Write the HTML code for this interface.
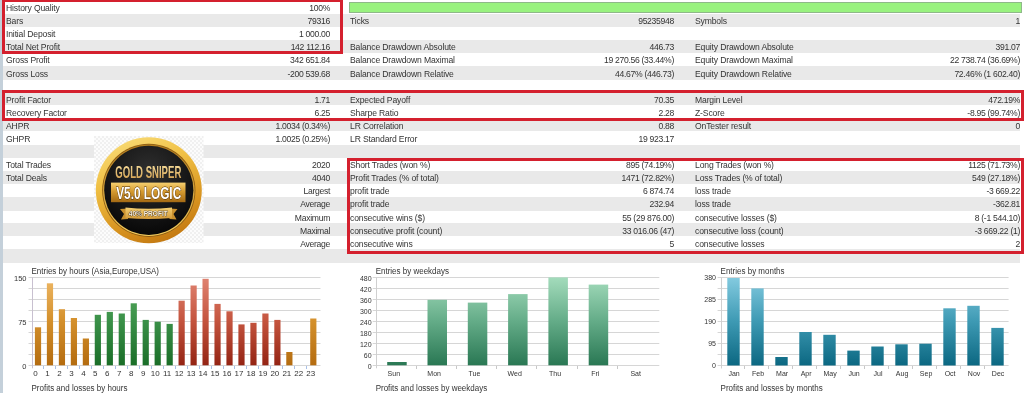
<!DOCTYPE html>
<html><head><meta charset="utf-8"><style>
html,body{margin:0;padding:0;}
body{width:1024px;height:412px;overflow:hidden;position:relative;background:#fff;filter:blur(0.3px);font-family:"Liberation Sans",sans-serif;}
.bg{position:absolute;left:3px;width:1017px;background:#e9e9e9;}
.t{position:absolute;font-size:8.6px;letter-spacing:-0.15px;line-height:13px;color:#333;white-space:nowrap;}
.box{position:absolute;box-sizing:border-box;border:3px solid #d4202e;}
.r{letter-spacing:-0.3px;}
.strip{position:absolute;left:0;top:0;width:3px;height:393px;background:#c4d0da;}
.ch,.logo{position:absolute;left:0;top:0;}
</style></head><body>
<div class="strip"></div>
<div class="bg" style="top:14px;height:13px"></div><div class="bg" style="top:40px;height:13px"></div><div class="bg" style="top:66px;height:14px"></div><div class="bg" style="top:92px;height:13px"></div><div class="bg" style="top:118px;height:13px"></div><div class="bg" style="top:145px;height:13px"></div><div class="bg" style="top:171px;height:13px"></div><div class="bg" style="top:197px;height:14px"></div><div class="bg" style="top:223px;height:13px"></div><div class="bg" style="top:249px;height:14px"></div><div class="t" style="left:6px;top:1.5px">History Quality</div><div class="t r" style="right:694px;top:1.5px">100%</div><div class="t" style="left:6px;top:14.5px">Bars</div><div class="t r" style="right:694px;top:14.5px">79316</div><div class="t" style="left:6px;top:27.5px">Initial Deposit</div><div class="t r" style="right:694px;top:27.5px">1 000.00</div><div class="t" style="left:6px;top:40.5px">Total Net Profit</div><div class="t r" style="right:694px;top:40.5px">142 112.16</div><div class="t" style="left:6px;top:53.5px">Gross Profit</div><div class="t r" style="right:694px;top:53.5px">342 651.84</div><div class="t" style="left:6px;top:67.5px">Gross Loss</div><div class="t r" style="right:694px;top:67.5px">-200 539.68</div><div class="t" style="left:6px;top:93.5px">Profit Factor</div><div class="t r" style="right:694px;top:93.5px">1.71</div><div class="t" style="left:6px;top:106.5px">Recovery Factor</div><div class="t r" style="right:694px;top:106.5px">6.25</div><div class="t" style="left:6px;top:119.5px">AHPR</div><div class="t r" style="right:694px;top:119.5px">1.0034 (0.34%)</div><div class="t" style="left:6px;top:132.5px">GHPR</div><div class="t r" style="right:694px;top:132.5px">1.0025 (0.25%)</div><div class="t" style="left:6px;top:158.5px">Total Trades</div><div class="t r" style="right:694px;top:158.5px">2020</div><div class="t" style="left:6px;top:171.5px">Total Deals</div><div class="t r" style="right:694px;top:171.5px">4040</div><div class="t r" style="right:694px;top:184.5px">Largest</div><div class="t r" style="right:694px;top:197.5px">Average</div><div class="t r" style="right:694px;top:211.5px">Maximum</div><div class="t r" style="right:694px;top:224.5px">Maximal</div><div class="t r" style="right:694px;top:237.5px">Average</div><div class="t" style="left:350px;top:14.5px">Ticks</div><div class="t r" style="right:350px;top:14.5px">95235948</div><div class="t" style="left:350px;top:40.5px">Balance Drawdown Absolute</div><div class="t r" style="right:350px;top:40.5px">446.73</div><div class="t" style="left:350px;top:53.5px">Balance Drawdown Maximal</div><div class="t r" style="right:350px;top:53.5px">19 270.56 (33.44%)</div><div class="t" style="left:350px;top:67.5px">Balance Drawdown Relative</div><div class="t r" style="right:350px;top:67.5px">44.67% (446.73)</div><div class="t" style="left:350px;top:93.5px">Expected Payoff</div><div class="t r" style="right:350px;top:93.5px">70.35</div><div class="t" style="left:350px;top:106.5px">Sharpe Ratio</div><div class="t r" style="right:350px;top:106.5px">2.28</div><div class="t" style="left:350px;top:119.5px">LR Correlation</div><div class="t r" style="right:350px;top:119.5px">0.88</div><div class="t" style="left:350px;top:132.5px">LR Standard Error</div><div class="t r" style="right:350px;top:132.5px">19 923.17</div><div class="t" style="left:350px;top:158.5px">Short Trades (won %)</div><div class="t r" style="right:350px;top:158.5px">895 (74.19%)</div><div class="t" style="left:350px;top:171.5px">Profit Trades (% of total)</div><div class="t r" style="right:350px;top:171.5px">1471 (72.82%)</div><div class="t" style="left:350px;top:184.5px">profit trade</div><div class="t r" style="right:350px;top:184.5px">6 874.74</div><div class="t" style="left:350px;top:197.5px">profit trade</div><div class="t r" style="right:350px;top:197.5px">232.94</div><div class="t" style="left:350px;top:211.5px">consecutive wins ($)</div><div class="t r" style="right:350px;top:211.5px">55 (29 876.00)</div><div class="t" style="left:350px;top:224.5px">consecutive profit (count)</div><div class="t r" style="right:350px;top:224.5px">33 016.06 (47)</div><div class="t" style="left:350px;top:237.5px">consecutive wins</div><div class="t r" style="right:350px;top:237.5px">5</div><div class="t" style="left:695px;top:14.5px">Symbols</div><div class="t r" style="right:4px;top:14.5px">1</div><div class="t" style="left:695px;top:40.5px">Equity Drawdown Absolute</div><div class="t r" style="right:4px;top:40.5px">391.07</div><div class="t" style="left:695px;top:53.5px">Equity Drawdown Maximal</div><div class="t r" style="right:4px;top:53.5px">22 738.74 (36.69%)</div><div class="t" style="left:695px;top:67.5px">Equity Drawdown Relative</div><div class="t r" style="right:4px;top:67.5px">72.46% (1 602.40)</div><div class="t" style="left:695px;top:93.5px">Margin Level</div><div class="t r" style="right:4px;top:93.5px">472.19%</div><div class="t" style="left:695px;top:106.5px">Z-Score</div><div class="t r" style="right:4px;top:106.5px">-8.95 (99.74%)</div><div class="t" style="left:695px;top:119.5px">OnTester result</div><div class="t r" style="right:4px;top:119.5px">0</div><div class="t" style="left:695px;top:158.5px">Long Trades (won %)</div><div class="t r" style="right:4px;top:158.5px">1125 (71.73%)</div><div class="t" style="left:695px;top:171.5px">Loss Trades (% of total)</div><div class="t r" style="right:4px;top:171.5px">549 (27.18%)</div><div class="t" style="left:695px;top:184.5px">loss trade</div><div class="t r" style="right:4px;top:184.5px">-3 669.22</div><div class="t" style="left:695px;top:197.5px">loss trade</div><div class="t r" style="right:4px;top:197.5px">-362.81</div><div class="t" style="left:695px;top:211.5px">consecutive losses ($)</div><div class="t r" style="right:4px;top:211.5px">8 (-1 544.10)</div><div class="t" style="left:695px;top:224.5px">consecutive loss (count)</div><div class="t r" style="right:4px;top:224.5px">-3 669.22 (1)</div><div class="t" style="left:695px;top:237.5px">consecutive losses</div><div class="t r" style="right:4px;top:237.5px">2</div><div style="position:absolute;left:349px;top:2px;width:671px;height:9px;background:#99f27f;border:1px solid #8fb889"></div>
<svg class="logo" width="1024" height="412" font-family="Liberation Sans, sans-serif">
<defs>
<pattern id="chk" x="94" y="136" width="4" height="4" patternUnits="userSpaceOnUse"><rect width="4" height="4" fill="#fcfcfc"/><rect width="2" height="2" fill="#f0f0f0"/><rect x="2" y="2" width="2" height="2" fill="#f0f0f0"/></pattern>
<linearGradient id="ring" x1="0.2" y1="0" x2="0.6" y2="1"><stop offset="0" stop-color="#f9dc78"/><stop offset="0.35" stop-color="#f0c044"/><stop offset="0.75" stop-color="#d89420"/><stop offset="1" stop-color="#c47a12"/></linearGradient>
<linearGradient id="rim" x1="0" y1="1" x2="0" y2="0"><stop offset="0" stop-color="#f4cc5c"/><stop offset="1" stop-color="#b07a1c"/></linearGradient>
<radialGradient id="blk" cx="0.5" cy="0.3" r="0.75"><stop offset="0" stop-color="#303030"/><stop offset="0.6" stop-color="#161616"/><stop offset="1" stop-color="#050505"/></radialGradient>
<linearGradient id="ban" x1="0" y1="0" x2="0" y2="1"><stop offset="0" stop-color="#f6d070"/><stop offset="0.45" stop-color="#d49a30"/><stop offset="1" stop-color="#a46a14"/></linearGradient>
<linearGradient id="rib" x1="0" y1="0" x2="0" y2="1"><stop offset="0" stop-color="#f4cf72"/><stop offset="1" stop-color="#d29a3a"/></linearGradient>
<linearGradient id="txtg" x1="0" y1="0" x2="0" y2="1"><stop offset="0" stop-color="#f8e0a0"/><stop offset="1" stop-color="#d09a48"/></linearGradient>
</defs>
<rect x="94" y="136" width="109.5" height="107" fill="url(#chk)"/>
<circle cx="148.8" cy="190.3" r="53" fill="url(#ring)"/>
<circle cx="148.8" cy="190.3" r="46.6" fill="#8a5a12"/>
<circle cx="148.8" cy="190.3" r="45.8" fill="url(#rim)"/>
<circle cx="148.8" cy="190.3" r="44.6" fill="url(#blk)"/>
<text x="148.3" y="178.4" font-size="16.5" font-weight="bold" text-anchor="middle" fill="url(#txtg)" textLength="66" lengthAdjust="spacingAndGlyphs">GOLD SNIPER</text>
<rect x="111" y="182.6" width="74.5" height="19.6" fill="url(#ban)"/>
<text x="148.7" y="198.6" font-size="17" font-weight="bold" text-anchor="middle" fill="#fff" stroke="#4a2a04" stroke-width="0.9" paint-order="stroke" textLength="65" lengthAdjust="spacingAndGlyphs">V5.0 LOGIC</text>
<path d="M120 209 L128 208.5 L128 219 L121 219.5 L124 214 Z M177.5 209 L169.5 208.5 L169.5 219 L176.5 219.5 L173.5 214 Z" fill="#c8902e"/>
<path d="M125.5 207.5 Q148.5 210 172 207.5 L172 218 Q148.5 220 125.5 218 Z" fill="url(#rib)"/>
<text x="148.3" y="216" font-size="6.8" font-weight="bold" text-anchor="middle" fill="#f8f0e0" stroke="#3a2608" stroke-width="0.7" paint-order="stroke" textLength="39" lengthAdjust="spacingAndGlyphs">40% PROFIT</text>
</svg>
<svg class="ch" width="1024" height="412" font-family="Liberation Sans, sans-serif"><defs><linearGradient id="go" gradientUnits="userSpaceOnUse" x1="0" y1="277" x2="0" y2="365"><stop offset="0" stop-color="#eeb866"/><stop offset="0.5" stop-color="#d4902c"/><stop offset="1" stop-color="#b46c10"/></linearGradient><linearGradient id="gg" gradientUnits="userSpaceOnUse" x1="0" y1="277" x2="0" y2="365"><stop offset="0" stop-color="#5cae62"/><stop offset="0.5" stop-color="#3a9048"/><stop offset="1" stop-color="#1a6e28"/></linearGradient><linearGradient id="gr" gradientUnits="userSpaceOnUse" x1="0" y1="277" x2="0" y2="365"><stop offset="0" stop-color="#e08472"/><stop offset="0.5" stop-color="#c4543e"/><stop offset="1" stop-color="#942414"/></linearGradient><linearGradient id="gw" gradientUnits="userSpaceOnUse" x1="0" y1="277" x2="0" y2="365"><stop offset="0" stop-color="#a4dcbc"/><stop offset="0.5" stop-color="#64ac88"/><stop offset="1" stop-color="#2a7854"/></linearGradient><linearGradient id="gm" gradientUnits="userSpaceOnUse" x1="0" y1="277" x2="0" y2="365"><stop offset="0" stop-color="#84cbe0"/><stop offset="0.5" stop-color="#3e9ab4"/><stop offset="1" stop-color="#0c6882"/></linearGradient></defs><line x1="28.5" y1="277.5" x2="320.5" y2="277.5" stroke="#d6d6d6" stroke-width="1"/><text x="26.5" y="280.70" font-size="7.5" text-anchor="end" fill="#333">150</text><line x1="28.5" y1="288.5" x2="320.5" y2="288.5" stroke="#d6d6d6" stroke-width="1"/><text x="26.5" y="291.70" font-size="7.5" text-anchor="end" fill="#333"></text><line x1="28.5" y1="299.5" x2="320.5" y2="299.5" stroke="#d6d6d6" stroke-width="1"/><text x="26.5" y="302.70" font-size="7.5" text-anchor="end" fill="#333"></text><line x1="28.5" y1="310.5" x2="320.5" y2="310.5" stroke="#d6d6d6" stroke-width="1"/><text x="26.5" y="313.70" font-size="7.5" text-anchor="end" fill="#333"></text><line x1="28.5" y1="321.5" x2="320.5" y2="321.5" stroke="#d6d6d6" stroke-width="1"/><text x="26.5" y="324.70" font-size="7.5" text-anchor="end" fill="#333">75</text><line x1="28.5" y1="332.5" x2="320.5" y2="332.5" stroke="#d6d6d6" stroke-width="1"/><text x="26.5" y="335.70" font-size="7.5" text-anchor="end" fill="#333"></text><line x1="28.5" y1="343.5" x2="320.5" y2="343.5" stroke="#d6d6d6" stroke-width="1"/><text x="26.5" y="346.70" font-size="7.5" text-anchor="end" fill="#333"></text><line x1="28.5" y1="354.5" x2="320.5" y2="354.5" stroke="#d6d6d6" stroke-width="1"/><text x="26.5" y="357.70" font-size="7.5" text-anchor="end" fill="#333"></text><line x1="28.5" y1="365.5" x2="320.5" y2="365.5" stroke="#d6d6d6" stroke-width="1"/><text x="26.5" y="368.70" font-size="7.5" text-anchor="end" fill="#333">0</text><line x1="32.5" y1="277.3" x2="32.5" y2="368.3" stroke="#c8c0d0" stroke-width="1"/><rect x="34.90" y="327.30" width="6.2" height="38.00" fill="url(#go)"/><text x="35.48" y="375.80" font-size="8" text-anchor="middle" fill="#333">0</text><rect x="46.87" y="283.30" width="6.2" height="82.00" fill="url(#go)"/><text x="47.45" y="375.80" font-size="8" text-anchor="middle" fill="#333">1</text><line x1="43.5" y1="366" x2="43.5" y2="369" stroke="#a8c0e8"/><rect x="58.84" y="309.20" width="6.2" height="56.10" fill="url(#go)"/><text x="59.42" y="375.80" font-size="8" text-anchor="middle" fill="#333">2</text><line x1="55.5" y1="366" x2="55.5" y2="369" stroke="#a8c0e8"/><rect x="70.81" y="318.00" width="6.2" height="47.30" fill="url(#go)"/><text x="71.40" y="375.80" font-size="8" text-anchor="middle" fill="#333">3</text><line x1="67.5" y1="366" x2="67.5" y2="369" stroke="#a8c0e8"/><rect x="82.78" y="338.50" width="6.2" height="26.80" fill="url(#go)"/><text x="83.37" y="375.80" font-size="8" text-anchor="middle" fill="#333">4</text><line x1="79.5" y1="366" x2="79.5" y2="369" stroke="#a8c0e8"/><rect x="94.75" y="314.80" width="6.2" height="50.50" fill="url(#gg)"/><text x="95.34" y="375.80" font-size="8" text-anchor="middle" fill="#333">5</text><line x1="91.5" y1="366" x2="91.5" y2="369" stroke="#a8c0e8"/><rect x="106.72" y="311.90" width="6.2" height="53.40" fill="url(#gg)"/><text x="107.31" y="375.80" font-size="8" text-anchor="middle" fill="#333">6</text><line x1="103.5" y1="366" x2="103.5" y2="369" stroke="#a8c0e8"/><rect x="118.69" y="313.50" width="6.2" height="51.80" fill="url(#gg)"/><text x="119.28" y="375.80" font-size="8" text-anchor="middle" fill="#333">7</text><line x1="115.5" y1="366" x2="115.5" y2="369" stroke="#a8c0e8"/><rect x="130.66" y="303.30" width="6.2" height="62.00" fill="url(#gg)"/><text x="131.25" y="375.80" font-size="8" text-anchor="middle" fill="#333">8</text><line x1="127.5" y1="366" x2="127.5" y2="369" stroke="#a8c0e8"/><rect x="142.63" y="319.90" width="6.2" height="45.40" fill="url(#gg)"/><text x="143.22" y="375.80" font-size="8" text-anchor="middle" fill="#333">9</text><line x1="139.5" y1="366" x2="139.5" y2="369" stroke="#a8c0e8"/><rect x="154.60" y="321.70" width="6.2" height="43.60" fill="url(#gg)"/><text x="155.19" y="375.80" font-size="8" text-anchor="middle" fill="#333">10</text><line x1="151.5" y1="366" x2="151.5" y2="369" stroke="#a8c0e8"/><rect x="166.57" y="323.90" width="6.2" height="41.40" fill="url(#gg)"/><text x="167.16" y="375.80" font-size="8" text-anchor="middle" fill="#333">11</text><line x1="163.5" y1="366" x2="163.5" y2="369" stroke="#a8c0e8"/><rect x="178.54" y="300.70" width="6.2" height="64.60" fill="url(#gr)"/><text x="179.12" y="375.80" font-size="8" text-anchor="middle" fill="#333">12</text><line x1="175.5" y1="366" x2="175.5" y2="369" stroke="#a8c0e8"/><rect x="190.51" y="285.50" width="6.2" height="79.80" fill="url(#gr)"/><text x="191.09" y="375.80" font-size="8" text-anchor="middle" fill="#333">13</text><line x1="187.5" y1="366" x2="187.5" y2="369" stroke="#a8c0e8"/><rect x="202.48" y="278.80" width="6.2" height="86.50" fill="url(#gr)"/><text x="203.06" y="375.80" font-size="8" text-anchor="middle" fill="#333">14</text><line x1="199.5" y1="366" x2="199.5" y2="369" stroke="#a8c0e8"/><rect x="214.45" y="303.90" width="6.2" height="61.40" fill="url(#gr)"/><text x="215.03" y="375.80" font-size="8" text-anchor="middle" fill="#333">15</text><line x1="211.5" y1="366" x2="211.5" y2="369" stroke="#a8c0e8"/><rect x="226.42" y="311.30" width="6.2" height="54.00" fill="url(#gr)"/><text x="227.01" y="375.80" font-size="8" text-anchor="middle" fill="#333">16</text><line x1="223.5" y1="366" x2="223.5" y2="369" stroke="#a8c0e8"/><rect x="238.39" y="324.40" width="6.2" height="40.90" fill="url(#gr)"/><text x="238.98" y="375.80" font-size="8" text-anchor="middle" fill="#333">17</text><line x1="234.5" y1="366" x2="234.5" y2="369" stroke="#a8c0e8"/><rect x="250.36" y="322.80" width="6.2" height="42.50" fill="url(#gr)"/><text x="250.95" y="375.80" font-size="8" text-anchor="middle" fill="#333">18</text><line x1="246.5" y1="366" x2="246.5" y2="369" stroke="#a8c0e8"/><rect x="262.33" y="313.50" width="6.2" height="51.80" fill="url(#gr)"/><text x="262.92" y="375.80" font-size="8" text-anchor="middle" fill="#333">19</text><line x1="258.5" y1="366" x2="258.5" y2="369" stroke="#a8c0e8"/><rect x="274.30" y="319.90" width="6.2" height="45.40" fill="url(#gr)"/><text x="274.88" y="375.80" font-size="8" text-anchor="middle" fill="#333">20</text><line x1="270.5" y1="366" x2="270.5" y2="369" stroke="#a8c0e8"/><rect x="286.27" y="352.00" width="6.2" height="13.30" fill="url(#go)"/><text x="286.86" y="375.80" font-size="8" text-anchor="middle" fill="#333">21</text><line x1="282.5" y1="366" x2="282.5" y2="369" stroke="#a8c0e8"/><text x="298.82" y="375.80" font-size="8" text-anchor="middle" fill="#333">22</text><line x1="294.5" y1="366" x2="294.5" y2="369" stroke="#a8c0e8"/><rect x="310.21" y="318.50" width="6.2" height="46.80" fill="url(#go)"/><text x="310.80" y="375.80" font-size="8" text-anchor="middle" fill="#333">23</text><line x1="306.5" y1="366" x2="306.5" y2="369" stroke="#a8c0e8"/><text transform="scale(0.89,1)" x="35.39" y="274" font-size="9" fill="#333">Entries by hours (Asia,Europe,USA)</text><text transform="scale(0.89,1)" x="35.39" y="391" font-size="9" fill="#333">Profits and losses by hours</text><line x1="372.7" y1="277.5" x2="659.3" y2="277.5" stroke="#d6d6d6" stroke-width="1"/><text x="371.6" y="280.70" font-size="7" text-anchor="end" fill="#333">480</text><line x1="372.7" y1="288.5" x2="659.3" y2="288.5" stroke="#d6d6d6" stroke-width="1"/><text x="371.6" y="291.70" font-size="7" text-anchor="end" fill="#333">420</text><line x1="372.7" y1="299.5" x2="659.3" y2="299.5" stroke="#d6d6d6" stroke-width="1"/><text x="371.6" y="302.70" font-size="7" text-anchor="end" fill="#333">360</text><line x1="372.7" y1="310.5" x2="659.3" y2="310.5" stroke="#d6d6d6" stroke-width="1"/><text x="371.6" y="313.70" font-size="7" text-anchor="end" fill="#333">300</text><line x1="372.7" y1="321.5" x2="659.3" y2="321.5" stroke="#d6d6d6" stroke-width="1"/><text x="371.6" y="324.70" font-size="7" text-anchor="end" fill="#333">240</text><line x1="372.7" y1="332.5" x2="659.3" y2="332.5" stroke="#d6d6d6" stroke-width="1"/><text x="371.6" y="335.70" font-size="7" text-anchor="end" fill="#333">180</text><line x1="372.7" y1="343.5" x2="659.3" y2="343.5" stroke="#d6d6d6" stroke-width="1"/><text x="371.6" y="346.70" font-size="7" text-anchor="end" fill="#333">120</text><line x1="372.7" y1="354.5" x2="659.3" y2="354.5" stroke="#d6d6d6" stroke-width="1"/><text x="371.6" y="357.70" font-size="7" text-anchor="end" fill="#333">60</text><line x1="372.7" y1="365.5" x2="659.3" y2="365.5" stroke="#d6d6d6" stroke-width="1"/><text x="371.6" y="368.70" font-size="7" text-anchor="end" fill="#333">0</text><line x1="376.5" y1="277.3" x2="376.5" y2="368.3" stroke="#d0d0d0" stroke-width="1"/><rect x="387.20" y="362.00" width="19.5" height="3.30" fill="url(#gw)"/><text x="393.85" y="375.80" font-size="7" text-anchor="middle" fill="#333">Sun</text><rect x="427.50" y="299.80" width="19.5" height="65.50" fill="url(#gw)"/><text x="434.15" y="375.80" font-size="7" text-anchor="middle" fill="#333">Mon</text><line x1="416.5" y1="366" x2="416.5" y2="369" stroke="#c8c8c8"/><rect x="467.80" y="302.60" width="19.5" height="62.70" fill="url(#gw)"/><text x="474.45" y="375.80" font-size="7" text-anchor="middle" fill="#333">Tue</text><line x1="456.5" y1="366" x2="456.5" y2="369" stroke="#c8c8c8"/><rect x="508.10" y="294.10" width="19.5" height="71.20" fill="url(#gw)"/><text x="514.75" y="375.80" font-size="7" text-anchor="middle" fill="#333">Wed</text><line x1="496.5" y1="366" x2="496.5" y2="369" stroke="#c8c8c8"/><rect x="548.40" y="277.40" width="19.5" height="87.90" fill="url(#gw)"/><text x="555.05" y="375.80" font-size="7" text-anchor="middle" fill="#333">Thu</text><line x1="536.5" y1="366" x2="536.5" y2="369" stroke="#c8c8c8"/><rect x="588.70" y="284.60" width="19.5" height="80.70" fill="url(#gw)"/><text x="595.35" y="375.80" font-size="7" text-anchor="middle" fill="#333">Fri</text><line x1="577.5" y1="366" x2="577.5" y2="369" stroke="#c8c8c8"/><text x="635.65" y="375.80" font-size="7" text-anchor="middle" fill="#333">Sat</text><line x1="617.5" y1="366" x2="617.5" y2="369" stroke="#c8c8c8"/><text transform="scale(0.89,1)" x="422.13" y="274" font-size="9" fill="#333">Entries by weekdays</text><text transform="scale(0.89,1)" x="422.13" y="391" font-size="9" fill="#333">Profits and losses by weekdays</text><line x1="717.6" y1="277.5" x2="1008.6" y2="277.5" stroke="#d6d6d6" stroke-width="1"/><text x="716" y="279.70" font-size="7" text-anchor="end" fill="#333">380</text><line x1="717.6" y1="288.5" x2="1008.6" y2="288.5" stroke="#d6d6d6" stroke-width="1"/><text x="716" y="290.72" font-size="7" text-anchor="end" fill="#333"></text><line x1="717.6" y1="299.5" x2="1008.6" y2="299.5" stroke="#d6d6d6" stroke-width="1"/><text x="716" y="301.75" font-size="7" text-anchor="end" fill="#333">285</text><line x1="717.6" y1="310.5" x2="1008.6" y2="310.5" stroke="#d6d6d6" stroke-width="1"/><text x="716" y="312.77" font-size="7" text-anchor="end" fill="#333"></text><line x1="717.6" y1="321.5" x2="1008.6" y2="321.5" stroke="#d6d6d6" stroke-width="1"/><text x="716" y="323.80" font-size="7" text-anchor="end" fill="#333">190</text><line x1="717.6" y1="332.5" x2="1008.6" y2="332.5" stroke="#d6d6d6" stroke-width="1"/><text x="716" y="334.82" font-size="7" text-anchor="end" fill="#333"></text><line x1="717.6" y1="343.5" x2="1008.6" y2="343.5" stroke="#d6d6d6" stroke-width="1"/><text x="716" y="345.85" font-size="7" text-anchor="end" fill="#333">95</text><line x1="717.6" y1="354.5" x2="1008.6" y2="354.5" stroke="#d6d6d6" stroke-width="1"/><text x="716" y="356.88" font-size="7" text-anchor="end" fill="#333"></text><line x1="717.6" y1="365.5" x2="1008.6" y2="365.5" stroke="#d6d6d6" stroke-width="1"/><text x="716" y="367.90" font-size="7" text-anchor="end" fill="#333">0</text><line x1="721.5" y1="277.3" x2="721.5" y2="368.5" stroke="#d0d0d0" stroke-width="1"/><rect x="727.30" y="278.00" width="12.4" height="87.50" fill="url(#gm)"/><text x="734.10" y="376.00" font-size="7" text-anchor="middle" fill="#333">Jan</text><rect x="751.30" y="288.40" width="12.4" height="77.10" fill="url(#gm)"/><text x="758.10" y="376.00" font-size="7" text-anchor="middle" fill="#333">Feb</text><line x1="744.5" y1="366" x2="744.5" y2="369" stroke="#c8c8c8"/><rect x="775.30" y="357.00" width="12.4" height="8.50" fill="url(#gm)"/><text x="782.10" y="376.00" font-size="7" text-anchor="middle" fill="#333">Mar</text><line x1="768.5" y1="366" x2="768.5" y2="369" stroke="#c8c8c8"/><rect x="799.30" y="332.00" width="12.4" height="33.50" fill="url(#gm)"/><text x="806.10" y="376.00" font-size="7" text-anchor="middle" fill="#333">Apr</text><line x1="792.5" y1="366" x2="792.5" y2="369" stroke="#c8c8c8"/><rect x="823.30" y="334.80" width="12.4" height="30.70" fill="url(#gm)"/><text x="830.10" y="376.00" font-size="7" text-anchor="middle" fill="#333">May</text><line x1="816.5" y1="366" x2="816.5" y2="369" stroke="#c8c8c8"/><rect x="847.30" y="350.60" width="12.4" height="14.90" fill="url(#gm)"/><text x="854.10" y="376.00" font-size="7" text-anchor="middle" fill="#333">Jun</text><line x1="840.5" y1="366" x2="840.5" y2="369" stroke="#c8c8c8"/><rect x="871.30" y="346.50" width="12.4" height="19.00" fill="url(#gm)"/><text x="878.10" y="376.00" font-size="7" text-anchor="middle" fill="#333">Jul</text><line x1="864.5" y1="366" x2="864.5" y2="369" stroke="#c8c8c8"/><rect x="895.30" y="344.30" width="12.4" height="21.20" fill="url(#gm)"/><text x="902.10" y="376.00" font-size="7" text-anchor="middle" fill="#333">Aug</text><line x1="888.5" y1="366" x2="888.5" y2="369" stroke="#c8c8c8"/><rect x="919.30" y="343.70" width="12.4" height="21.80" fill="url(#gm)"/><text x="926.10" y="376.00" font-size="7" text-anchor="middle" fill="#333">Sep</text><line x1="912.5" y1="366" x2="912.5" y2="369" stroke="#c8c8c8"/><rect x="943.30" y="308.30" width="12.4" height="57.20" fill="url(#gm)"/><text x="950.10" y="376.00" font-size="7" text-anchor="middle" fill="#333">Oct</text><line x1="936.5" y1="366" x2="936.5" y2="369" stroke="#c8c8c8"/><rect x="967.30" y="305.80" width="12.4" height="59.70" fill="url(#gm)"/><text x="974.10" y="376.00" font-size="7" text-anchor="middle" fill="#333">Nov</text><line x1="960.5" y1="366" x2="960.5" y2="369" stroke="#c8c8c8"/><rect x="991.30" y="327.90" width="12.4" height="37.60" fill="url(#gm)"/><text x="998.10" y="376.00" font-size="7" text-anchor="middle" fill="#333">Dec</text><line x1="984.5" y1="366" x2="984.5" y2="369" stroke="#c8c8c8"/><text transform="scale(0.89,1)" x="809.66" y="274" font-size="9" fill="#333">Entries by months</text><text transform="scale(0.89,1)" x="809.66" y="391" font-size="9" fill="#333">Profits and losses by months</text></svg>
<div class="box" style="left:2px;top:-1px;width:341px;height:55px"></div><div class="box" style="left:2px;top:90px;width:1022px;height:31px"></div><div class="box" style="left:347px;top:158px;width:677px;height:96px"></div></body></html>
